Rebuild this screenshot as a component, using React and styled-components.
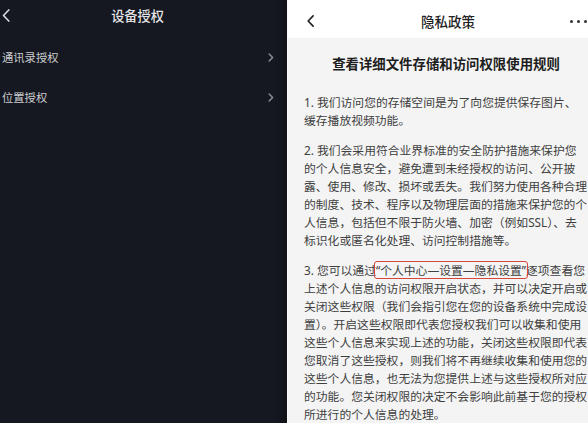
import React from "react";
import styled, { createGlobalStyle } from "styled-components";

const GlobalStyle = createGlobalStyle`
  html, body {
    margin: 0;
    padding: 0;
    background: #ffffff;
  }
  body {
    font-family: "Noto Sans", "Noto Sans CJK SC", sans-serif;
  }
`;

const Screen = styled.div`
  display: flex;
  width: 588px;
  height: 423px;
  overflow: hidden;
`;

/* left phone: 设备授权 (dark) */
const DarkFrame = styled.div`
  width: 287px;
  flex-shrink: 0;
  overflow: hidden;
`;

const DarkPanel = styled.div`
  width: 299px;
  height: 100%;
  margin-left: -12px;
  background: linear-gradient(to right, #151821 0, #151821 287px, #101217 299px);
`;

const DarkHeader = styled.div`
  height: 30px;
  display: grid;
  grid-template-columns: 40px 1fr 40px;
  align-items: center;
  padding-left: 14px;
  padding-right: 14px;
  box-sizing: border-box;
`;

const DarkTitle = styled.div`
  grid-column: 2;
  text-align: center;
  font-size: 13.2px;
  font-weight: 500;
  color: #e4e4e6;
`;

const DarkList = styled.div`
  display: flex;
  flex-direction: column;
  margin-top: 7px;
`;

const DarkRow = styled.div`
  height: 40px;
  display: flex;
  align-items: center;
  justify-content: space-between;
  padding: 0 13px 0 14px;
  font-size: 11.3px;
  color: #cbccd0;
`;

const IconBox = styled.span`
  display: flex;
  align-items: center;
  justify-self: ${({ end }) => (end ? "end" : "start")};
`;

/* right phone: 隐私政策 (light) */
const LightFrame = styled.div`
  flex: 1;
  overflow: hidden;
  border-left: 1px solid #fbfbfb;
`;

const LightPanel = styled.div`
  width: 316px;
  height: 100%;
  background: #f4f4f4;
  display: flex;
  flex-direction: column;
`;

const LightHeader = styled.div`
  height: 38px;
  flex-shrink: 0;
  background: #ffffff;
  display: grid;
  grid-template-columns: 40px 1fr 40px;
  align-items: center;
  padding: 4px 17px 0 19px;
  box-sizing: border-box;
`;

const LightTitle = styled.div`
  text-align: center;
  font-size: 13.5px;
  font-weight: 500;
  color: #222222;
  margin-left: 2px;
`;

const Dots = styled.span`
  justify-self: end;
  display: flex;
  gap: 4px;
  span {
    width: 3px;
    height: 3px;
    border-radius: 50%;
    background: #333333;
  }
`;

const Content = styled.div`
  padding: 16px 16px 0;
`;

const Heading = styled.h2`
  margin: 0 0 19px;
  text-align: center;
  font-size: 13.4px;
  line-height: 20px;
  font-weight: 700;
  color: #1d1d1d;
`;

const Para = styled.p`
  margin: 0 0 12px;
  font-size: 11.8px;
  line-height: 18px;
  color: #404040;
`;

const Line = styled.span`
  display: block;
  white-space: nowrap;
`;

const Highlight = styled.span`
  position: relative;
  &::after {
    content: "";
    position: absolute;
    left: -2px;
    right: -2px;
    top: -1px;
    bottom: -1px;
    border: 1.5px solid #d9463b;
    border-radius: 3px;
  }
`;

const ChevronLeft = ({ color, w, h, sw }) => (
  <svg width={w} height={h} viewBox="0 0 8 14" fill="none">
    <path d="M7 1 L1.3 7 L7 13" stroke={color} strokeWidth={sw} strokeLinecap="round" strokeLinejoin="round" />
  </svg>
);

const ChevronRight = () => (
  <svg width="6" height="9" viewBox="0 0 6 9" fill="none">
    <path d="M1.2 1 L4.6 4.5 L1.2 8" stroke="#8b8d94" strokeWidth="1.5" strokeLinecap="round" strokeLinejoin="round" />
  </svg>
);

const rows = ["通讯录授权", "位置授权"];

const paragraphs = [
  ["1. 我们访问您的存储空间是为了向您提供保存图片、", "缓存播放视频功能。"],
  [
    "2. 我们会采用符合业界标准的安全防护措施来保护您",
    "的个人信息安全，避免遭到未经授权的访问、公开披",
    "露、使用、修改、损坏或丢失。我们努力使用各种合理",
    "的制度、技术、程序以及物理层面的措施来保护您的个",
    "人信息，包括但不限于防火墙、加密（例如SSL）、去",
    "标识化或匿名化处理、访问控制措施等。",
  ],
  [
    <>
      3. 您可以通过<Highlight>“个人中心—设置—隐私设置”</Highlight>逐项查看您
    </>,
    "上述个人信息的访问权限开启状态，并可以决定开启或",
    "关闭这些权限（我们会指引您在您的设备系统中完成设",
    "置）。开启这些权限即代表您授权我们可以收集和使用",
    "这些个人信息来实现上述的功能，关闭这些权限即代表",
    "您取消了这些授权，则我们将不再继续收集和使用您的",
    "这些个人信息，也无法为您提供上述与这些授权所对应",
    "的功能。您关闭权限的决定不会影响此前基于您的授权",
    "所进行的个人信息的处理。",
  ],
];

export default function App() {
  return (
    <>
      <GlobalStyle />
      <Screen>
        <DarkFrame>
          <DarkPanel>
            <DarkHeader>
              <IconBox>
                <ChevronLeft color="#dcdde0" w={8} h={13} sw={1.7} />
              </IconBox>
              <DarkTitle>设备授权</DarkTitle>
            </DarkHeader>
            <DarkList>
              {rows.map((r) => (
                <DarkRow key={r}>
                  <span>{r}</span>
                  <ChevronRight />
                </DarkRow>
              ))}
            </DarkList>
          </DarkPanel>
        </DarkFrame>

        <LightFrame>
          <LightPanel>
            <LightHeader>
              <IconBox>
                <ChevronLeft color="#222222" w={7} h={12} sw={1.9} />
              </IconBox>
              <LightTitle>隐私政策</LightTitle>
              <Dots>
                <span />
                <span />
                <span />
              </Dots>
            </LightHeader>
            <Content>
              <Heading>查看详细文件存储和访问权限使用规则</Heading>
              {paragraphs.map((lines, i) => (
                <Para key={i}>
                  {lines.map((l, j) => (
                    <Line key={j}>{l}</Line>
                  ))}
                </Para>
              ))}
            </Content>
          </LightPanel>
        </LightFrame>
      </Screen>
    </>
  );
}
